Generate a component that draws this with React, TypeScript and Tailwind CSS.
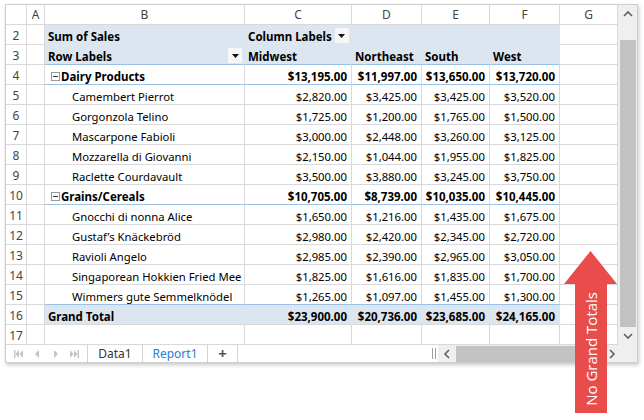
import React from 'react';

type Kind = 'title' | 'labels' | 'group' | 'item' | 'lastItem' | 'total' | 'empty';

type Row = { n: number; kind: Kind; label?: string; vals?: string[] };

const rows: Row[] = [
  { n: 2, kind: 'title' },
  { n: 3, kind: 'labels' },
  { n: 4, kind: 'group', label: 'Dairy Products', vals: ['$13,195.00', '$11,997.00', '$13,650.00', '$13,720.00'] },
  { n: 5, kind: 'item', label: 'Camembert Pierrot', vals: ['$2,820.00', '$3,425.00', '$3,425.00', '$3,520.00'] },
  { n: 6, kind: 'item', label: 'Gorgonzola Telino', vals: ['$1,725.00', '$1,200.00', '$1,765.00', '$1,500.00'] },
  { n: 7, kind: 'item', label: 'Mascarpone Fabioli', vals: ['$3,000.00', '$2,448.00', '$3,260.00', '$3,125.00'] },
  { n: 8, kind: 'item', label: 'Mozzarella di Giovanni', vals: ['$2,150.00', '$1,044.00', '$1,955.00', '$1,825.00'] },
  { n: 9, kind: 'item', label: 'Raclette Courdavault', vals: ['$3,500.00', '$3,880.00', '$3,245.00', '$3,750.00'] },
  { n: 10, kind: 'group', label: 'Grains/Cereals', vals: ['$10,705.00', '$8,739.00', '$10,035.00', '$10,445.00'] },
  { n: 11, kind: 'item', label: 'Gnocchi di nonna Alice', vals: ['$1,650.00', '$1,216.00', '$1,435.00', '$1,675.00'] },
  { n: 12, kind: 'item', label: 'Gustaf\u2019s Kn\u00e4ckebr\u00f6d', vals: ['$2,980.00', '$2,420.00', '$2,345.00', '$2,720.00'] },
  { n: 13, kind: 'item', label: 'Ravioli Angelo', vals: ['$2,985.00', '$2,390.00', '$2,965.00', '$3,050.00'] },
  { n: 14, kind: 'item', label: 'Singaporean Hokkien Fried Mee', vals: ['$1,825.00', '$1,616.00', '$1,835.00', '$1,700.00'] },
  { n: 15, kind: 'lastItem', label: 'Wimmers gute Semmelkn\u00f6del', vals: ['$1,265.00', '$1,097.00', '$1,455.00', '$1,300.00'] },
  { n: 16, kind: 'total', label: 'Grand Total', vals: ['$23,900.00', '$20,736.00', '$23,685.00', '$24,165.00'] },
  { n: 17, kind: 'empty' },
];

// widths of columns C..F
const valW = ['w-[107px]', 'w-[70px]', 'w-[68px]', 'w-[70px]'];
const regions = ['Midwest', 'Northeast', 'South', 'West'];

const grid = 'h-[20px] shrink-0 border-r border-b border-[#d9d9d9]';

const DropBtn = () => (
  <span className="w-[14px] h-[15px] bg-[#f7f7f7] flex items-center justify-center shrink-0">
    <svg width="7" height="4" viewBox="0 0 7 4"><polygon points="0,0 7,0 3.5,4" fill="#111" /></svg>
  </span>
);

const Minus = () => (
  <span className="w-[9px] h-[9px] border border-[#9a9a9a] bg-white flex items-center justify-center shrink-0 mr-[1px] mb-[1px]">
    <span className="w-[5px] h-px bg-[#333]" />
  </span>
);

function pivotCell(kind: Kind) {
  switch (kind) {
    case 'title':
      return 'bg-[#dce6f1] border-r-[#dce6f1] border-b-[#dce6f1]';
    case 'labels':
      return 'bg-[#dce6f1] border-r-[#dce6f1] border-b-[#9bc2e6]';
    case 'group':
    case 'lastItem':
      return 'border-b-[#9bc2e6]';
    case 'total':
      return 'bg-[#dce6f1] border-r-[#dce6f1]';
    default:
      return '';
  }
}

const SheetRow = ({ row }: { row: Row }) => {
  const bold = row.kind !== 'item' && row.kind !== 'lastItem';
  const pc = pivotCell(row.kind);
  const txt = bold ? 'font-bold text-[11.5px]' : 'text-[11.3px]';
  return (
    <div className="flex">
      <div className={`${grid} w-[21px] flex items-end pb-[2px] justify-center text-[#444]`}>{row.n}</div>
      <div className={`${grid} w-[18px]`} />
      <div className={`${grid} ${pc} w-[200px] flex items-end pb-[2px] text-black whitespace-nowrap ${txt}`}>
        {row.kind === 'title' && <span className="pl-[3px]">Sum of Sales</span>}
        {row.kind === 'labels' && (
          <>
            <span className="pl-[3px] flex-1">Row Labels</span>
            <span className="mr-[2px] mb-[-1px]"><DropBtn /></span>
          </>
        )}
        {row.kind === 'group' && (
          <span className="pl-[6px] flex items-end"><Minus />{row.label}</span>
        )}
        {(row.kind === 'item' || row.kind === 'lastItem') && (
          <span className="pl-[27px]">{row.label}</span>
        )}
        {row.kind === 'total' && <span className="pl-[3px]">{row.label}</span>}
      </div>
      {valW.map((w, i) => (
        <div
          key={i}
          className={`${grid} ${pc} ${w} flex items-end pb-[2px] text-black whitespace-nowrap ${txt} ${
            row.vals ? 'justify-end pr-[4px]' : 'pl-[3px]'
          }`}
        >
          {row.vals && row.vals[i]}
          {row.kind === 'labels' && regions[i]}
          {row.kind === 'title' && i === 0 && (
            <span className="flex items-end gap-[3px]">
              Column Labels
              <span className="mb-[-1px]"><DropBtn /></span>
            </span>
          )}
        </div>
      ))}
      <div className={`${grid} w-[58px]`} />
    </div>
  );
};

const Chevron = ({ dir }: { dir: 'up' | 'down' | 'left' | 'right' }) => {
  const pts = {
    up: '1,6 5,2 9,6',
    down: '1,2 5,6 9,2',
    left: '6,1 2,5 6,9',
    right: '2,1 6,5 2,9',
  }[dir];
  const vert = dir === 'up' || dir === 'down';
  return (
    <svg width={vert ? 10 : 8} height={vert ? 8 : 10} viewBox={vert ? '0 0 10 8' : '0 0 8 10'}>
      <polyline points={pts} fill="none" stroke="#606060" strokeWidth="1.6" />
    </svg>
  );
};

const NavIcon = ({ kind }: { kind: 'first' | 'prev' | 'next' | 'last' }) => (
  <svg width="10" height="8" viewBox="0 0 10 8" fill="#c4c4c4">
    {kind === 'first' && (
      <>
        <rect x="0" y="0" width="1.4" height="8" />
        <polygon points="5,0 5,8 1.5,4" />
        <polygon points="9,0 9,8 5.5,4" />
      </>
    )}
    {kind === 'prev' && <polygon points="7,0 7,8 3,4" />}
    {kind === 'next' && <polygon points="3,0 3,8 7,4" />}
    {kind === 'last' && (
      <>
        <polygon points="1,0 1,8 4.5,4" />
        <polygon points="5,0 5,8 8.5,4" />
        <rect x="8.6" y="0" width="1.4" height="8" />
      </>
    )}
  </svg>
);

export default function App() {
  return (
    <div className="relative w-[644px] h-[420px] bg-white font-['Noto_Sans',sans-serif] text-[12px] leading-none overflow-hidden">
      <div className="ml-[5px] mt-[4px] w-[633px] border border-[#cdcdcd] bg-white shadow-[1px_2px_4px_rgba(0,0,0,0.22)] flex flex-col">
        <div className="flex">
          <div className="flex flex-col w-[612px]">
            {/* column headers */}
            <div className="flex text-[#444]">
              <div className={`${grid} w-[21px]`} />
              {[
                ['A', 'w-[18px]'],
                ['B', 'w-[200px]'],
                ['C', 'w-[107px]'],
                ['D', 'w-[70px]'],
                ['E', 'w-[68px]'],
                ['F', 'w-[70px]'],
                ['G', 'w-[58px]'],
              ].map(([l, w]) => (
                <div key={l} className={`${grid} ${w} flex items-end pb-[3px] justify-center`}>{l}</div>
              ))}
            </div>
            {rows.map((r) => (
              <SheetRow key={r.n} row={r} />
            ))}
          </div>
          {/* vertical scrollbar */}
          <div className="w-[19px] bg-[#efefef] flex flex-col">
            <div className="h-[18px] flex items-center justify-center"><Chevron dir="up" /></div>
            <div className="h-[17px]" />
            <div className="h-[287px] ml-[2px] w-[16px] bg-[#c2c2c2]" />
            <div className="h-[18px] flex items-center justify-center"><Chevron dir="down" /></div>
          </div>
        </div>
        {/* sheet tabs + horizontal scrollbar */}
        <div className="flex h-[17px] text-[12px]">
          <div className="w-[81px] flex items-center justify-around px-[4px]">
            <NavIcon kind="first" />
            <NavIcon kind="prev" />
            <NavIcon kind="next" />
            <NavIcon kind="last" />
          </div>
          <div className="w-[55px] border-l border-[#d4d4d4] flex items-center justify-center text-[#333]">Data1</div>
          <div className="w-[65px] border-l border-[#d4d4d4] flex items-center justify-center text-[#2e7bd0]">Report1</div>
          <div className="w-[31px] border-l border-r border-[#d4d4d4] flex items-center justify-center text-[#555] font-bold text-[15px]">+</div>
          <div className="flex-1 flex items-center justify-end pr-[2px]">
            <span className="flex gap-[2px] h-[11px]">
              <span className="w-px bg-[#a0a0a0]" />
              <span className="w-px bg-[#a0a0a0]" />
            </span>
          </div>
          <div className="w-[180px] bg-[#efefef] flex items-center">
            <div className="w-[18px] flex items-center justify-center"><Chevron dir="left" /></div>
            <div className="w-[149px] h-[16px] bg-[#c2c2c2]" />
            <div className="flex-1 flex items-center justify-center"><Chevron dir="right" /></div>
          </div>
          <div className="w-[19px] bg-[#efefef]" />
        </div>
      </div>

      {/* callout arrow */}
      <svg className="absolute left-[564px] top-[251px]" width="53" height="162" viewBox="0 0 53 162">
        <polygon points="26.5,0 53,33 43,33 43,162 11,162 11,33 0,33" fill="#e84c4b" />
      </svg>
      <div className="absolute left-[575px] top-[284px] w-[32px] h-[129px] flex items-center justify-center">
        <span className="[writing-mode:vertical-rl] rotate-180 text-white text-[15px] font-['Open_Sans',sans-serif] whitespace-nowrap">
          No Grand Totals
        </span>
      </div>
    </div>
  );
}
